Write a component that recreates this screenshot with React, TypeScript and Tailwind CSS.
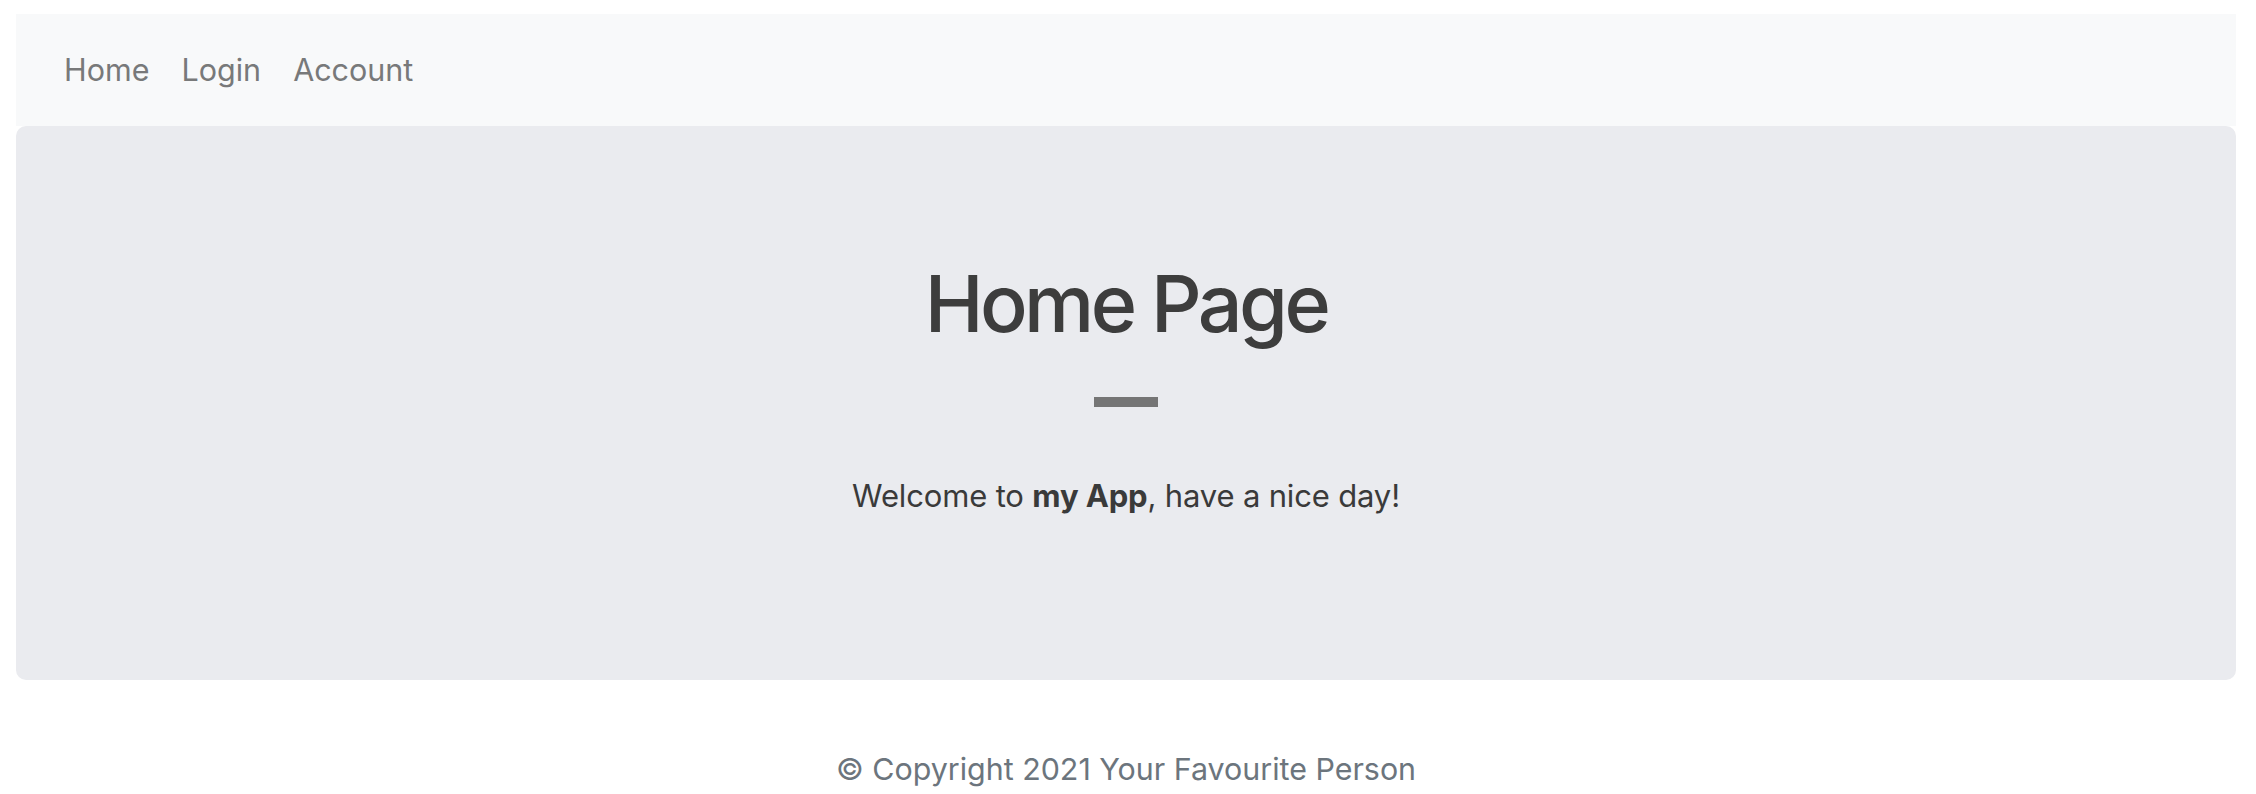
import React from "react";

export default function App() {
  return (
    <div
      className="min-h-[794px] bg-white pt-[14px] pl-4 pr-5"
      style={{ fontFamily: 'Inter, "Noto Sans", "Liberation Sans", sans-serif' }}
    >
      <nav className="flex h-[112px] items-center gap-[32px] bg-[#f8f9fa] pl-[48px] text-[30.5px] text-[#78797a]">
        <a href="#" className="leading-none">Home</a>
        <a href="#" className="leading-none">Login</a>
        <a href="#" className="leading-none">Account</a>
      </nav>
      <main className="flex h-[554px] flex-col items-center rounded-[10px] bg-[#eaebef] pt-[138px]">
        <h1 className="text-[79px] leading-none font-medium tracking-[-0.045em] text-[#3d3d3d]">Home Page</h1>
        <div className="mt-[54px] h-[10px] w-[64px] bg-[#757575]" />
        <p className="mt-[73px] text-[31px] leading-none tracking-[-0.005em] text-[#3a3a3a]">
          Welcome to <strong className="font-bold">my App</strong>, have a nice day!
        </p>
      </main>
      <footer className="mt-[74px] text-center text-[30.4px] leading-none text-[#6c757d]">
        © Copyright 2021 Your Favourite Person
      </footer>
    </div>
  );
}
